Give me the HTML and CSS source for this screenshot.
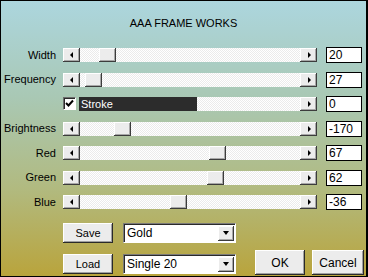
FILE: index.html
```html
<!DOCTYPE html>
<html lang="en">
<head>
    <meta charset="UTF-8">
    <title>AAA Frame Works</title>
    <link rel="stylesheet" href="styles.css">
</head>
<body>

    <div class="dialog">
        <h1 class="title">AAA FRAME WORKS</h1>

        <!-- Sliders -->
        <div class="controls">
            <div class="row">
                <span class="label">Width</span>
                <div class="slider">
                    <span class="arrow left"></span>
                    <div class="track"><span class="thumb" style="left: 19px"></span></div>
                    <span class="arrow right"></span>
                </div>
                <input class="value" type="text" value="20">
            </div>

            <div class="row">
                <span class="label">Frequency</span>
                <div class="slider">
                    <span class="arrow left"></span>
                    <div class="track"><span class="thumb" style="left: 5px"></span></div>
                    <span class="arrow right"></span>
                </div>
                <input class="value" type="text" value="27">
            </div>

            <div class="row">
                <span class="label"></span>
                <div class="slider">
                    <span class="check">
                        <svg width="9" height="9" viewBox="0 0 9 9"><path d="M1 4 L3.5 6.5 L8 1.5" fill="none" stroke="#000" stroke-width="2"/></svg>
                    </span>
                    <div class="track stroke">
                        <span class="fill">Stroke</span>
                    </div>
                    <span class="arrow right"></span>
                </div>
                <input class="value" type="text" value="0">
            </div>

            <div class="row">
                <span class="label">Brightness</span>
                <div class="slider">
                    <span class="arrow left"></span>
                    <div class="track"><span class="thumb" style="left: 34px"></span></div>
                    <span class="arrow right"></span>
                </div>
                <input class="value" type="text" value="-170">
            </div>

            <div class="row">
                <span class="label">Red</span>
                <div class="slider">
                    <span class="arrow left"></span>
                    <div class="track"><span class="thumb" style="left: 129px"></span></div>
                    <span class="arrow right"></span>
                </div>
                <input class="value" type="text" value="67">
            </div>

            <div class="row">
                <span class="label">Green</span>
                <div class="slider">
                    <span class="arrow left"></span>
                    <div class="track"><span class="thumb" style="left: 127px"></span></div>
                    <span class="arrow right"></span>
                </div>
                <input class="value" type="text" value="62">
            </div>

            <div class="row">
                <span class="label">Blue</span>
                <div class="slider">
                    <span class="arrow left"></span>
                    <div class="track"><span class="thumb" style="left: 90px"></span></div>
                    <span class="arrow right"></span>
                </div>
                <input class="value" type="text" value="-36">
            </div>
        </div>

        <!-- Presets and dialog buttons -->
        <div class="footer">
            <div class="presets">
                <div class="preset">
                    <button class="btn">Save</button>
                    <div class="combo"><span>Gold</span><span class="drop"></span></div>
                </div>
                <div class="preset">
                    <button class="btn">Load</button>
                    <div class="combo"><span>Single 20</span><span class="drop"></span></div>
                </div>
            </div>
            <div class="actions">
                <button class="btn big">OK</button>
                <button class="btn big cancel">Cancel</button>
            </div>
        </div>
    </div>

</body>
</html>
```

FILE: styles.css
```css
body {
    margin: 0;
    font-family: "Liberation Sans", Arial, sans-serif;
    font-size: 11px;
    color: #000;
}

.dialog {
    box-sizing: border-box;
    width: 368px;
    height: 277px;
    border: 1px solid #000;
    border-right-width: 2px;
    background: linear-gradient(#acd6de 0%, #a9c8b4 35%, #b1ba80 68%, #b9a43c 100%);
    display: flex;
    flex-direction: column;
}

.title {
    margin: 16px 0 0 0;
    font-size: 11px;
    font-weight: normal;
    line-height: 13px;
    text-align: center;
}

/* Slider rows */
.controls {
    margin-top: 17px;
    display: flex;
    flex-direction: column;
    gap: 8.5px;
}

.row {
    display: flex;
    align-items: center;
    height: 16px;
}

.label {
    width: 55px;
    margin-right: 7px;
    text-align: right;
    line-height: 13px;
}

.slider {
    display: flex;
    width: 254px;
    height: 14px;
}

.arrow {
    width: 17px;
    height: 14px;
    box-sizing: border-box;
    background-color: #ececec;
    box-shadow: inset -1px -1px #3c3c3c, inset 1px 1px #fff, inset -2px -2px #a8a8a8;
    display: flex;
    justify-content: center;
    align-items: center;
}

.arrow::after {
    content: "";
    border-top: 3px solid transparent;
    border-bottom: 3px solid transparent;
}

.arrow.left::after {
    border-right: 3px solid #000;
    margin-right: 1px;
}

.arrow.right::after {
    border-left: 3px solid #000;
    margin-left: 1px;
}

.track {
    flex: 1;
    position: relative;
    background: repeating-conic-gradient(#ffffff 0 25%, #ebebeb 0 50%) 0 0 / 2px 2px;
}

.thumb {
    position: absolute;
    top: 0;
    width: 17px;
    height: 14px;
    box-sizing: border-box;
    background-color: #ececec;
    box-shadow: inset -1px -1px #3c3c3c, inset 1px 1px #fff, inset -2px -2px #a8a8a8;
}

.check {
    width: 13px;
    height: 13px;
    margin-right: 3px;
    box-sizing: border-box;
    background: #fff;
    border: 1px solid;
    border-color: #6c6c6c #fff #fff #6c6c6c;
    box-shadow: inset 1px 1px #2a2a2a;
    display: flex;
    justify-content: center;
    align-items: center;
}

.fill {
    display: block;
    width: 118px;
    height: 14px;
    padding-left: 2px;
    box-sizing: border-box;
    background: #2c2c2c;
    color: #fff;
    line-height: 14px;
}

.value {
    box-sizing: border-box;
    width: 36px;
    height: 16px;
    margin: 0 0 0 9px;
    padding: 0 2px;
    border: 1px solid #000;
    background: #fff;
    font-family: "Liberation Sans", Arial, sans-serif;
    font-size: 12px;
    color: #000;
    outline: none;
}

/* Footer */
.footer {
    margin-top: 13px;
    display: flex;
    align-items: flex-end;
    padding-left: 62px;
}

.presets {
    display: flex;
    flex-direction: column;
    gap: 11px;
    padding-bottom: 1px;
}

.preset {
    display: flex;
    gap: 10px;
}

.btn {
    box-sizing: border-box;
    width: 50px;
    height: 20px;
    padding: 0;
    border: none;
    background-color: #ececec;
    box-shadow: inset -1px -1px #2a2a2a, inset 1px 1px #fff, inset -2px -2px #a0a0a0;
    font-family: "Liberation Sans", Arial, sans-serif;
    font-size: 11px;
    color: #000;
}

.combo {
    box-sizing: border-box;
    width: 113px;
    height: 20px;
    border: 1px solid;
    border-color: #7a7a7a #fff #fff #7a7a7a;
    box-shadow: inset 1px 1px #2a2a2a;
    background: #fff;
    display: flex;
    align-items: center;
    justify-content: space-between;
    padding: 0 1px 0 3px;
    font-size: 12px;
}

.drop {
    width: 16px;
    height: 15px;
    box-sizing: border-box;
    background-color: #ececec;
    box-shadow: inset -1px -1px #3c3c3c, inset 1px 1px #fff, inset -2px -2px #a8a8a8;
    display: flex;
    justify-content: center;
    align-items: center;
}

.drop::after {
    content: "";
    border-left: 3.5px solid transparent;
    border-right: 3.5px solid transparent;
    border-top: 4px solid #000;
    margin-bottom: 1px;
}

.actions {
    display: flex;
    gap: 7px;
    margin-left: 19px;
}

.btn.big {
    height: 25px;
    font-size: 12px;
}

.btn.cancel {
    width: 52px;
}
```
